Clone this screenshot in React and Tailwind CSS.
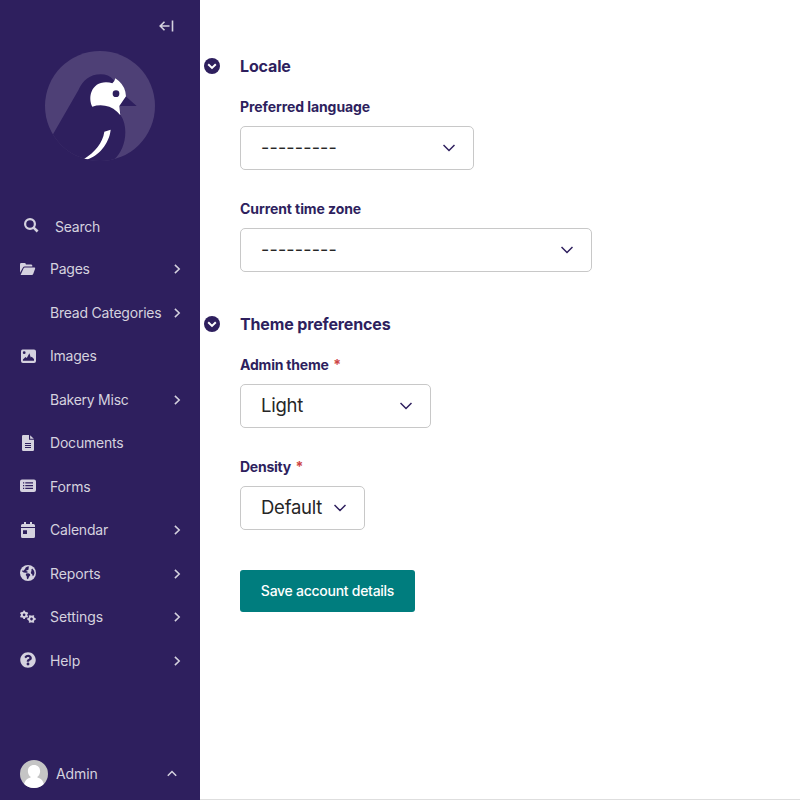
import React from "react";
import { FaQuestionCircle } from "react-icons/fa";

const Chevron = ({ className }) => (
  <svg className={className} width="8" height="10" viewBox="0 0 8 10" fill="none" stroke="currentColor" strokeWidth="1.5">
    <path d="M1.900 0.900 6.200 5 1.900 9.100" />
  </svg>
);

const Logo = () => (
  <svg width="110" height="110" viewBox="45 152 330 330">
    <defs>
      <clipPath id="disc"><circle cx="210" cy="317" r="165" /></clipPath>
    </defs>
    <circle cx="210" cy="317" r="165" fill="#4e4076" />
    <g clipPath="url(#disc)">
      <path fill="#2e1f5e" d="M69 402 145 270C158 240 180 222 212 222Q236 222 250 238L287 288 320 317H268L272 345C282 360 286 377 286 395C286 430 272 460 253 477L240 490H60Z" />
      <path fill="#fff" d="M187 319C173 293 183 246 228 246Q239 246 247 249 254 244 256 234 280 250 286 274L288 288 268 317 271 345Q252 320 225 316 205 313 187 319Z" />
      <circle cx="258" cy="280" r="10" fill="#2e1f5e" />
      <path fill="#fff" d="M223 394 242 388C238 430 204 468 172 477L162 476C195 455 218 428 223 394Z" />
    </g>
  </svg>
);

const SearchIcon = () => (
  <svg className="mb-[3px]" width="15" height="15" viewBox="0 0 15 15" fill="none" stroke="currentColor">
    <circle cx="6" cy="6" r="4.900" strokeWidth="2.200" />
    <path d="M9.600 9.600 13.600 13.500" strokeWidth="2.600" />
  </svg>
);

const FolderIcon = () => (
  <svg width="16" height="16" viewBox="0 0 16 16" fill="currentColor">
    <path d="M0 11.700V3.200Q0 2 1.200 2H4.600Q5.700 2 5.900 3.400H11Q12.200 3.400 12.300 4.600V5.500H4.800Q3.500 5.500 2.800 6.700Z" />
    <path d="M0.600 14 3.400 7.700Q3.800 6.600 5 6.600H14.400Q15.500 6.600 15.100 7.700L13.300 12.800Q12.900 14 11.700 14Z" />
  </svg>
);

const DocIcon = () => (
  <svg width="16" height="16" viewBox="0 0 16 16" fill="currentColor">
    <path fillRule="evenodd" d="M3.200 0H9V4.800H14V14.800Q14 16 12.800 16H3.200Q2 16 2 14.800V1.200Q2 0 3.200 0ZM5 8V9H11V8ZM5 10V11H11V10ZM5 12V13H11V12Z" />
    <path d="M10.100 0.200 13.800 3.800H10.100Z" />
  </svg>
);

const ImageIcon = () => (
  <svg width="16" height="16" viewBox="0 0 16 16" fill="currentColor">
    <path fillRule="evenodd" d="M2.500 1.500h11.500Q16 1.500 16 3.500v9.500Q16 15 14 15H3Q1 15 1 13V3.500Q1 1.500 2.500 1.500ZM4.200 3.300a1.400 1.400 0 1 0 0 2.800 1.400 1.400 0 0 0 0-2.800ZM2.900 12.700H14V10.900L11.700 8.700 10.800 9.500 9.400 5.300 6.800 9.900 5.500 9.100 2.900 11.600Z" />
  </svg>
);

const FormIcon = () => (
  <svg width="16" height="16" viewBox="0 0 16 16" fill="currentColor">
    <path fillRule="evenodd" d="M2 1.400h12Q16 1.400 16 3.400v8.500Q16 13.900 14 13.900H2Q0 13.900 0 11.900V3.400Q0 1.400 2 1.400ZM3 4.200v1.200h1.200V4.200ZM5.300 4.200v1.200H13V4.200ZM3 7v1.200h1.200V7ZM5.300 7v1.200H13V7ZM3 9.800v1.200h1.200V9.800ZM5.300 9.800v1.200H13V9.800Z" />
  </svg>
);

const CalendarIcon = () => (
  <svg width="16" height="16" viewBox="0 0 16 16" fill="currentColor">
    <path fillRule="evenodd" d="M4 0h2v2h4V0h2v2h1.500Q15 2 15 3.500V5H1V3.500Q1 2 2.500 2H4ZM1 6h14v8.500Q15 16 13.500 16h-11Q1 16 1 14.500ZM3 8.200v3.800h4V8.200Z" />
  </svg>
);

const GlobeIcon = () => (
  <svg width="16" height="16" viewBox="0 0 16 16">
    <circle cx="8" cy="8" r="8" fill="currentColor" />
    <path fill="#2e1f5e" d="M7.600 1.500 9.200 1.600 8.600 2.800 8.600 4.400 7.300 5.200 6.300 5.300 6.600 6.200 8.200 7 6.700 7.700 5.800 7.700 3.700 7.400 2.200 6.600 2 5.600 3.500 5.700 5 4 5.700 2.600ZM6.200 8.500 8.200 8.200 10 9.100 10.200 10.400 9 11.800 8.400 13.600 7.600 14.300 6.900 13.500 6.700 11.300 5.700 9.900ZM12.300 3.600 14 5.700 14.500 8 13.900 10.300 12.700 11.300 12.300 9.400 11.100 8.600 10.800 7 11.600 6.100 11.200 4.700Z" />
  </svg>
);

const teeth = [0, 60, 120, 180, 240, 300];
const Gear = ({ x, y, turn }) => (
  <g transform={`translate(${x} ${y}) rotate(${turn})`}>
    <circle r="2.300" fill="none" stroke="currentColor" strokeWidth="1.900" />
    {teeth.map((a) => (
      <rect key={a} x="-0.900" y="-4.200" width="1.800" height="1.800" fill="currentColor" transform={`rotate(${a})`} />
    ))}
  </g>
);
const CogsIcon = () => (
  <svg width="16" height="16" viewBox="0 0 16 16">
    <Gear x={4.100} y={5.800} turn={0} />
    <Gear x={11.500} y={10} turn={30} />
  </svg>
);

const items = [
  { label: "Pages", icon: <FolderIcon />, more: true, tracking: "tracking-[-0.25px]" },
  { label: "Bread Categories", more: true, tracking: "tracking-[-0.22px]" },
  { label: "Images", icon: <ImageIcon />, tracking: "tracking-[-0.25px]" },
  { label: "Bakery Misc", more: true, tracking: "tracking-[-0.25px]" },
  { label: "Documents", icon: <DocIcon />, tracking: "tracking-[-0.2px]" },
  { label: "Forms", icon: <FormIcon />, tracking: "tracking-[-0.15px]" },
  { label: "Calendar", icon: <CalendarIcon />, more: true, tracking: "tracking-[-0.2px]" },
  { label: "Reports", icon: <GlobeIcon />, more: true, tracking: "tracking-[-0.1px]" },
  { label: "Settings", icon: <CogsIcon />, more: true, tracking: "tracking-[-0.05px]" },
  { label: "Help", icon: <FaQuestionCircle size={16} />, more: true, tracking: "tracking-[-0.1px]" },
];

const Select = ({ value, className, dashed }) => (
  <div className={`flex h-11 items-center justify-between rounded-[5px] border border-[#c8c8c8] pl-5 pr-[18px] text-[#262626] ${className}`}>
    <span className={dashed ? "mb-0.5 text-[18px] tracking-[0.16px]" : "text-[18.5px] tracking-[-0.25px]"}>{value}</span>
    <svg width="12" height="8" viewBox="0 0 12 8" fill="none" stroke="#2e1f5e" strokeWidth="1.500">
      <path d="M0.500 1 6 6.500 11.500 1" />
    </svg>
  </div>
);

const Label = ({ children, required, className = "tracking-[-0.08px]" }) => (
  <div className={`flex h-5 items-center pb-0.5 text-[14px] font-bold text-[#2e1f5e] ${className}`}>
    {children}
    {required && <span className="ml-[4.500px] text-[#cd4444]">*</span>}
  </div>
);

const Heading = ({ children }) => (
  <div className="flex h-6 items-center">
    <svg className="mr-5 ml-1 shrink-0" width="16" height="16" viewBox="0 0 16 16">
      <circle cx="8" cy="8" r="8" fill="#2e1f5e" />
      <path d="M4.200 6.200 8 9.900 11.800 6.200" fill="none" stroke="#fff" strokeWidth="2" />
    </svg>
    <h2 className="text-[16px] font-bold tracking-[-0.14px] text-[#2e1f5e]">{children}</h2>
  </div>
);

export default function App() {
  return (
    <div className="flex h-[800px] w-[800px] overflow-hidden bg-white font-['Inter','Liberation_Sans',sans-serif]">
      <aside className="flex w-[200px] shrink-0 flex-col bg-[#2e1f5e] text-[#d5d2df]">
        <div className="flex h-[51px] justify-end pr-[26px] pt-5">
          <svg width="15" height="12" viewBox="0 0 15 12" fill="none" stroke="currentColor" strokeWidth="1.600">
            <path d="M10.500 6H1.200M5.500 1.800 1.200 6l4.300 4.200M13.500 0.500v11" />
          </svg>
        </div>
        <div className="flex h-[154px] justify-center"><Logo /></div>
        <div className="flex h-[43px] items-center pl-6 text-[14px]">
          <SearchIcon />
          <span className="ml-4 tracking-[-0.25px]">Search</span>
        </div>
        <nav>
          {items.map((it) => (
            <div key={it.label} className="flex h-[43.500px] items-center pl-5 pr-[19px] text-[14px]">
              <span className="mr-[14px] mb-0.5 flex w-4 justify-center">{it.icon}</span>
              <span className={`mb-0.5 flex-1 whitespace-nowrap ${it.tracking}`}>{it.label}</span>
              {it.more && <Chevron className="mb-px" />}
            </div>
          ))}
        </nav>
        <div className="mt-auto flex h-[52px] items-center pl-5 pr-[23px] text-[14px]">
          <svg width="28" height="28" viewBox="0 0 28 28">
            <defs><clipPath id="avatar"><circle cx="14" cy="14" r="14" /></clipPath></defs>
            <g clipPath="url(#avatar)">
              <rect width="28" height="28" fill="#c5c5c5" />
              <path fill="#fff" d="M14 5c3.800 0 6.300 2.700 6.100 6.400-.2 2.600-1.300 4.300-2.700 5.400v.6c4 .8 5.800 3.800 6.600 7L20 29H8l-4-4.600c.8-3.200 2.600-6.200 6.600-7v-.6c-1.400-1.100-2.500-2.800-2.700-5.400C7.700 7.700 10.200 5 14 5Z" />
            </g>
          </svg>
          <span className="mb-0.5 ml-2 flex-1 tracking-[-0.1px]">Admin</span>
          <svg width="10" height="7" viewBox="0 0 10 7" className="mb-px" fill="none" stroke="currentColor" strokeWidth="1.500">
            <path d="M0.800 5.800 5 1.500l4.200 4.300" />
          </svg>
        </div>
      </aside>
      <main className="flex-1 border-b border-[#dedede] pt-[54px]">
        <Heading>Locale</Heading>
        <div className="ml-10 pt-[19px]">
          <Label>Preferred language</Label>
          <Select value="---------" dashed className="mt-[9px] w-[234px]" />
          <div className="h-[29px]" />
          <Label>Current time zone</Label>
          <Select value="---------" dashed className="mt-[9px] w-[352px]" />
        </div>
        <div className="h-10" />
        <Heading>Theme preferences</Heading>
        <div className="ml-10 pt-[19px]">
          <Label required className="tracking-[-0.2px]">Admin theme</Label>
          <Select value="Light" className="mt-[9px] w-[191px]" />
          <div className="h-[29px]" />
          <Label required className="tracking-[-0.25px]">Density</Label>
          <Select value="Default" className="mt-[9px] w-[125px]" />
          <button className="mt-10 flex h-[42px] w-[175px] items-center justify-center rounded-[3px] bg-[#007d7e] pb-0.5 text-[14px] font-medium tracking-[-0.27px] text-white">
            Save account details
          </button>
        </div>
      </main>
    </div>
  );
}
